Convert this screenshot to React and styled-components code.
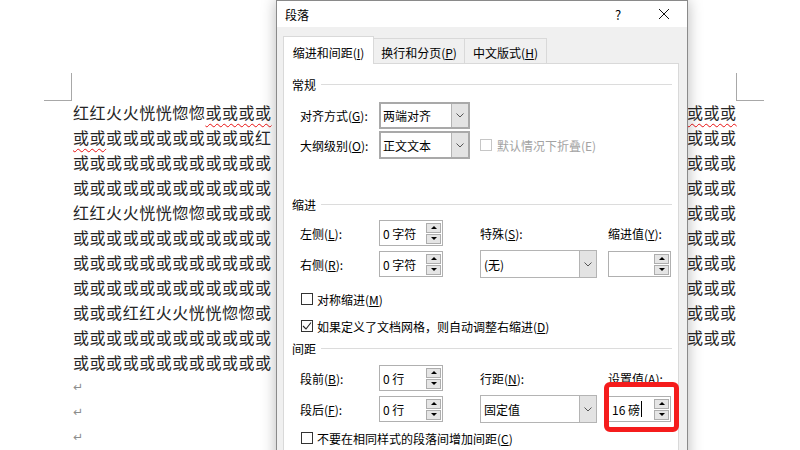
import React from 'react';
import styled, { createGlobalStyle } from 'styled-components';

const Global = createGlobalStyle`
  html, body { margin: 0; padding: 0; background: #fff; }
  body {
    width: 800px; height: 450px; overflow: hidden;
    font-family: "Noto Sans CJK SC", "Noto Sans", sans-serif;
  }
  * { box-sizing: border-box; }
`;

const Screen = styled.div`
  position: relative;
  width: 800px;
  height: 450px;
  overflow: hidden;
  background: #fff;
`;

/* ---------- document page ---------- */
const Page = styled.div`
  padding: 73px 0 0 44px;
`;

const CornerRow = styled.div`
  display: flex;
  justify-content: space-between;
  width: 720px;
  height: 28px;
`;

const Corner = styled.div`
  width: 28px;
  height: 28px;
  border-bottom: 1px solid #a8a8a8;
  ${(p) => (p.$side === 'left' ? 'border-right: 1px solid #a8a8a8;' : 'border-left: 1px solid #a8a8a8;')}
`;

const DocBody = styled.div`
  display: flex;
  margin-top: -1px;
`;

/* text visible beside the dialog */
const TextColumn = styled.div`
  width: ${(p) => p.$w}px;
  margin-left: ${(p) => p.$ml}px;
  font-family: "Noto Sans CJK SC", sans-serif;
  font-size: 16px;
  letter-spacing: 0.55px;
  line-height: 25px;
  color: #262626;
  white-space: nowrap;
`;

const Line = styled.div`
  height: 25px;
`;

const Misspelled = styled.span`
  text-decoration: underline wavy #e81010;
  text-decoration-thickness: 1px;
  text-underline-offset: 4px;
`;

const ReturnMark = styled.div`
  height: 25px;
  font-family: "DejaVu Sans", sans-serif;
  font-size: 12px;
  line-height: 25px;
  letter-spacing: 0;
  color: #8c8c8c;
`;

/* ---------- dialog ---------- */
const Dialog = styled.div`
  position: absolute;
  left: 276px;
  top: 0;
  width: 412px;
  height: 470px;
  background: #f0f0f0;
  border: 1px solid #8a8a8a;
  box-shadow: 0 0 14px rgba(0, 0, 0, 0.28);
  font-size: 12px;
  color: #000;
`;

const TitleBar = styled.div`
  display: flex;
  align-items: center;
  height: 26px;
  background: #fff;
  padding-left: 8px;
`;

const Title = styled.div`
  flex: 1;
  font-size: 12px;
`;

const TitleBtn = styled.div`
  width: 46px;
  height: 26px;
  display: flex;
  align-items: center;
  justify-content: center;
  font-size: 13px;
`;

const Body = styled.div`
  padding: 9px 8px 0 6px;
`;

const TabRow = styled.div`
  display: flex;
  align-items: flex-end;
  height: 28px;
  margin-bottom: -1px;
  position: relative;
  z-index: 1;
`;

const Tab = styled.div`
  display: flex;
  align-items: center;
  justify-content: center;
  padding: 3px 0 0 0;
  width: ${(p) => p.$w}px;
  height: ${(p) => (p.$active ? 28 : 25)}px;
  margin-bottom: ${(p) => (p.$active ? 0 : 1)}px;
  margin-left: ${(p) => (p.$first ? 0 : -1)}px;
  background: ${(p) => (p.$active ? '#fff' : '#f0f0f0')};
  border: 1px solid #d9d9d9;
  border-bottom: none;
  font-size: 12px;
  white-space: nowrap;
`;

const Panel = styled.div`
  background: #fff;
  border: 1px solid #d9d9d9;
  height: 420px;
  padding: 12px 6px 0 8px;
`;

const SectionHeader = styled.div`
  display: flex;
  align-items: center;
  gap: 5px;
  height: 16px;
  margin-top: ${(p) => p.$mt || 0}px;
  font-size: 12px;
  &::after {
    content: '';
    flex: 1;
    height: 1px;
    background: #dcdcdc;
  }
`;

const FieldGrid = styled.div`
  display: grid;
  grid-template-columns: 79px 101px 128px 63px;
  row-gap: ${(p) => p.$gap}px;
  align-items: center;
  margin: ${(p) => p.$mt}px 0 0 8px;
`;

const Label = styled.div`
  font-size: 12px;
  white-space: nowrap;
  color: ${(p) => (p.$disabled ? '#a3a3a3' : '#000')};
`;

const SelectBox = styled.div`
  display: flex;
  width: ${(p) => p.$w}px;
  height: ${(p) => p.$h || 27}px;
  background: #fff;
  border: ${(p) => (p.$strong ? '2px solid #a9a9a9' : '1px solid #b4b4b4')};
`;

const SelectValue = styled.div`
  flex: 1;
  display: flex;
  align-items: center;
  padding-left: ${(p) => (p.$strong ? 2 : 3)}px;
  font-size: 12px;
`;

const DropBtn = styled.div`
  width: 17px;
  display: flex;
  align-items: center;
  justify-content: center;
  background: #e3e3e3;
  border-left: 1px solid #b4b4b4;
`;

const SpinBox = styled.div`
  position: relative;
  display: flex;
  width: ${(p) => p.$w}px;
  height: 26px;
  background: #fff;
  border: 1px solid #b0b0b0;
`;

const SpinValue = styled.div`
  flex: 1;
  display: flex;
  align-items: center;
  padding-left: 3px;
  font-size: 12px;
  white-space: nowrap;
`;

const SpinBtns = styled.div`
  display: flex;
  flex-direction: column;
  justify-content: center;
  gap: 1px;
  padding-right: 1px;
`;

const SpinBtn = styled.div`
  width: 15px;
  height: 10px;
  display: flex;
  align-items: center;
  justify-content: center;
  background: #e5e5e5;
  border: 1px solid #adadad;
  &::before {
    content: '';
    width: 0;
    height: 0;
    border-left: 3px solid transparent;
    border-right: 3px solid transparent;
    ${(p) => (p.$down ? 'border-top: 3px solid #000;' : 'border-bottom: 3px solid #000;')}
  }
`;

const Caret = styled.span`
  display: inline-block;
  width: 1px;
  height: 16px;
  background: #000;
  margin-left: 1px;
`;

const Highlight = styled.div`
  position: absolute;
  left: -5px;
  top: -15px;
  right: -9px;
  bottom: -11px;
  border: 5px solid #f51c1c;
  border-radius: 6px;
  pointer-events: none;
`;

const CheckRow = styled.div`
  display: flex;
  align-items: center;
  gap: 4px;
  height: 18px;
  margin: ${(p) => p.$mt}px 0 0 9px;
  font-size: 12px;
`;

const InlineCheck = styled.div`
  display: flex;
  align-items: center;
  gap: 5px;
`;

const Box = styled.div`
  width: 12px;
  height: 12px;
  display: flex;
  align-items: center;
  justify-content: center;
  background: #fff;
  border: 1px solid ${(p) => (p.$disabled ? '#c6c6c6' : '#333')};
`;

/* ---------- small parts ---------- */
const Chevron = () => (
  <svg width="8" height="5" viewBox="0 0 8 5">
    <polyline points="0.5,0.5 4,4 7.5,0.5" fill="none" stroke="#555" strokeWidth="1" />
  </svg>
);

const Select = ({ value, w, h, strong }) => (
  <SelectBox $w={w} $h={h} $strong={strong}>
    <SelectValue $strong={strong}>{value}</SelectValue>
    <DropBtn>
      <Chevron />
    </DropBtn>
  </SelectBox>
);

const Spinner = ({ value, w = 64, children }) => (
  <SpinBox $w={w}>
    <SpinValue>{value}</SpinValue>
    <SpinBtns>
      <SpinBtn />
      <SpinBtn $down />
    </SpinBtns>
    {children}
  </SpinBox>
);

const Check = ({ checked, disabled }) => (
  <Box $disabled={disabled}>
    {checked && (
      <svg width="10" height="10" viewBox="0 0 10 10">
        <polyline points="1,5 4,8 9,1.5" fill="none" stroke="#222" strokeWidth="1.1" />
      </svg>
    )}
  </Box>
);

const M = ({ k }) => (
  <>
    (<u>{k}</u>)
  </>
);

/* ---------- document content (visible parts beside the dialog) ---------- */
const o = (n) => '或'.repeat(n);
const HUO = '红红火火恍恍惚惚';

const leftLines = [
  <>
    {HUO}
    <Misspelled>{o(4)}</Misspelled>
  </>,
  <>
    <Misspelled>{o(2)}</Misspelled>
    {o(9)}红
  </>,
  o(12),
  o(12),
  <>
    {HUO}
    {o(4)}
  </>,
  o(12),
  o(12),
  o(12),
  <>
    {o(3)}
    {HUO}
    {o(1)}
  </>,
  o(12),
  o(12),
];

const rightLines = [
  <Misspelled key="m">{o(3)}</Misspelled>,
  o(3),
  o(3),
  o(3),
  o(3),
  o(3),
  o(3),
  o(3),
  o(3),
  o(3),
];

export default function App() {
  return (
    <Screen>
      <Global />
      <Page>
        <CornerRow>
          <Corner $side="left" />
          <Corner $side="right" />
        </CornerRow>
        <DocBody>
          <TextColumn $w={203} $ml={29}>
            {leftLines.map((l, i) => (
              <Line key={i}>{l}</Line>
            ))}
            <ReturnMark>↵</ReturnMark>
            <ReturnMark>↵</ReturnMark>
            <ReturnMark>↵</ReturnMark>
          </TextColumn>
          <TextColumn $w={50} $ml={411}>
            {rightLines.map((l, i) => (
              <Line key={i}>{l}</Line>
            ))}
          </TextColumn>
        </DocBody>
      </Page>

      <Dialog>
        <TitleBar>
          <Title>段落</Title>
          <TitleBtn>?</TitleBtn>
          <TitleBtn>
            <svg width="12" height="12" viewBox="0 0 12 12">
              <path d="M1 1 L11 11 M11 1 L1 11" stroke="#111" strokeWidth="1" />
            </svg>
          </TitleBtn>
        </TitleBar>
        <Body>
          <TabRow>
            <Tab $active $first $w={91}>
              缩进和间距<M k="I" />
            </Tab>
            <Tab $w={92}>
              换行和分页<M k="P" />
            </Tab>
            <Tab $w={83}>
              中文版式<M k="H" />
            </Tab>
          </TabRow>
          <Panel>
            <SectionHeader>常规</SectionHeader>
            <FieldGrid $mt={10} $gap={2}>
              <Label>
                对齐方式<M k="G" />:
              </Label>
              <Select value="两端对齐" w={91} strong />
              <div />
              <div />
              <Label>
                大纲级别<M k="O" />:
              </Label>
              <Select value="正文文本" w={91} h={28} strong />
              <InlineCheck style={{ gridColumn: '3 / 5' }}>
                <Check disabled />
                <Label $disabled>默认情况下折叠(E)</Label>
              </InlineCheck>
            </FieldGrid>

            <SectionHeader $mt={37}>缩进</SectionHeader>
            <FieldGrid $mt={8} $gap={4}>
              <Label>
                左侧<M k="L" />:
              </Label>
              <Spinner value="0 字符" />
              <Label>
                特殊<M k="S" />:
              </Label>
              <Label>
                缩进值<M k="Y" />:
              </Label>
              <Label>
                右侧<M k="R" />:
              </Label>
              <Spinner value="0 字符" />
              <Select value="(无)" w={117} h={28} />
              <Spinner value="" w={63} />
            </FieldGrid>
            <CheckRow $mt={12}>
              <Check />
              <span>
                对称缩进<M k="M" />
              </span>
            </CheckRow>
            <CheckRow $mt={9}>
              <Check checked />
              <span>
                如果定义了文档网格，则自动调整右缩进<M k="D" />
              </span>
            </CheckRow>

            <SectionHeader $mt={5}>间距</SectionHeader>
            <FieldGrid $mt={9} $gap={4}>
              <Label>
                段前<M k="B" />:
              </Label>
              <Spinner value="0 行" />
              <Label>
                行距<M k="N" />:
              </Label>
              <Label>
                设置值<M k="A" />:
              </Label>
              <Label>
                段后<M k="F" />:
              </Label>
              <Spinner value="0 行" />
              <Select value="固定值" w={117} h={28} />
              <Spinner
                w={63}
                value={
                  <>
                    16 磅<Caret />
                  </>
                }
              >
                <Highlight />
              </Spinner>
            </FieldGrid>
            <CheckRow $mt={6}>
              <Check />
              <span>
                不要在相同样式的段落间增加间距<M k="C" />
              </span>
            </CheckRow>
          </Panel>
        </Body>
      </Dialog>
    </Screen>
  );
}
